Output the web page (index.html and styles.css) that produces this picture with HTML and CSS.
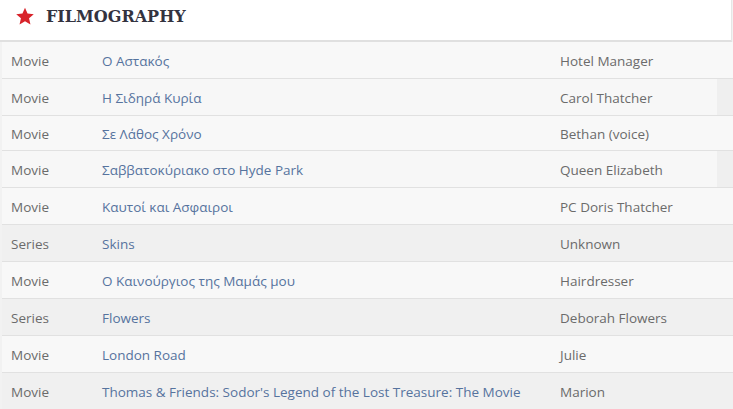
FILE: index.html
```html
<!DOCTYPE html>
<html lang="el">
<head>
<meta charset="utf-8">
<title>Filmography</title>
<link rel="stylesheet" href="styles.css">
</head>
<body>
<section class="panel">
  <header class="panel-head">
    <svg class="star" viewBox="0 0 24 24" width="20" height="19" aria-hidden="true">
      <path d="M12 1l3.2 7.3 7.9.7-6 5.3 1.8 7.8L12 18l-6.9 4.1 1.8-7.8-6-5.3 7.9-.7z" fill="#d8232a"/>
    </svg>
    <h2 class="panel-title">FILMOGRAPHY</h2>
  </header>
  <table class="films">
    <tbody>
      <tr class="row light"><td class="type">Movie</td><td class="title"><a href="#">Ο Αστακός</a></td><td class="role">Hotel Manager</td></tr>
      <tr class="row split"><td class="type">Movie</td><td class="title"><a href="#">Η Σιδηρά Κυρία</a></td><td class="role">Carol Thatcher</td></tr>
      <tr class="row light short"><td class="type">Movie</td><td class="title"><a href="#">Σε Λάθος Χρόνο</a></td><td class="role">Bethan (voice)</td></tr>
      <tr class="row split"><td class="type">Movie</td><td class="title"><a href="#">Σαββατοκύριακο στο Hyde Park</a></td><td class="role">Queen Elizabeth</td></tr>
      <tr class="row light"><td class="type">Movie</td><td class="title"><a href="#">Καυτοί και Ασφαιροι</a></td><td class="role">PC Doris Thatcher</td></tr>
      <tr class="row dark"><td class="type">Series</td><td class="title"><a href="#">Skins</a></td><td class="role">Unknown</td></tr>
      <tr class="row light"><td class="type">Movie</td><td class="title"><a href="#">Ο Καινούργιος της Μαμάς μου</a></td><td class="role">Hairdresser</td></tr>
      <tr class="row dark"><td class="type">Series</td><td class="title"><a href="#">Flowers</a></td><td class="role">Deborah Flowers</td></tr>
      <tr class="row light"><td class="type">Movie</td><td class="title"><a href="#">London Road</a></td><td class="role">Julie</td></tr>
      <tr class="row dark"><td class="type">Movie</td><td class="title"><a href="#">Thomas &amp; Friends: Sodor's Legend of the Lost Treasure: The Movie</a></td><td class="role">Marion</td></tr>
    </tbody>
  </table>
</section>
</body>
</html>
```
FILE: styles.css
```css
html, body {
  margin: 0;
  padding: 0;
}
body {
  background: #f2f2f2;
  font-family: "Open Sans", "Noto Sans", sans-serif;
  font-size: 13.5px;
  color: #666;
}
.panel {
  width: 733px;
}
.panel-head {
  display: flex;
  align-items: center;
  gap: 11px;
  height: 40px;
  padding-left: 15px;
  background: #fff;
  border-right: 1px solid #e6e6e6;
  border-bottom: 2px solid #e0e0e0;
  width: 716px;
  box-sizing: content-box;
}
.star {
  display: block;
  margin-top: -7px;
}
.panel-title {
  margin: 0;
  margin-top: -8px;
  font-family: "DejaVu Serif", serif;
  font-weight: bold;
  font-size: 16px;
  letter-spacing: 0;
  color: #33333f;
}
.films {
  margin-left: 2px;
  width: 731px;
  border-collapse: collapse;
}
.row td {
  height: 35px;
  padding: 1px 0 0;
  border-bottom: 1px solid #e1e1e1;
  vertical-align: middle;
  white-space: nowrap;
}
.row.short td {
  height: 33px;
}
.light {
  background: #f8f8f8;
}
.dark {
  background: #f0f0f0;
}
.split {
  background: linear-gradient(to right, #f7f7f7 715px, #efefef 715px);
}
.type {
  width: 91px;
  padding-left: 9px !important;
  color: #6b6b6b;
}
.title {
  width: 458px;
}
.title a {
  color: #56739e;
  text-decoration: none;
}
.role {
  color: #6b6b6b;
}
```
